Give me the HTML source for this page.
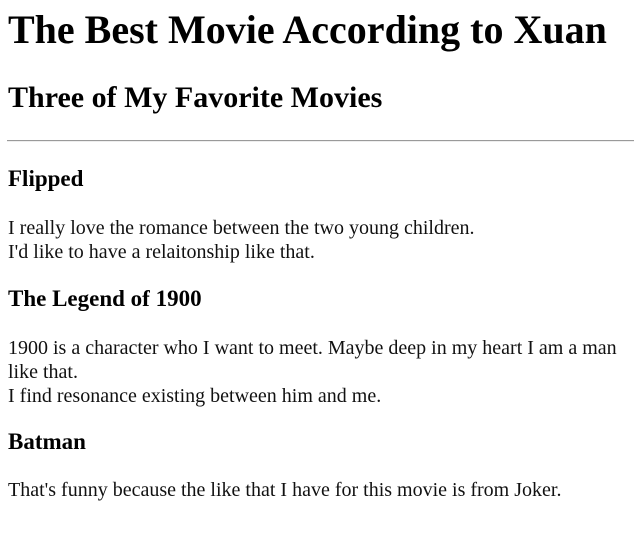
<!DOCTYPE html>
<html><head><style>
body{margin:0;background:#fff;color:#000;font-family:"Liberation Serif","Times New Roman",serif;}
.a{position:absolute;left:8px;white-space:nowrap;margin:0;font-family:"Liberation Serif","Times New Roman",serif;}
h1.a{font-size:40px;line-height:40px;font-weight:bold;top:10px;}
h2.a{font-size:30px;line-height:30px;font-weight:bold;top:83px;}
h3.a{font-size:23px;line-height:23px;font-weight:bold;}
p.a{font-size:20px;line-height:24px;color:#111;}
.hr{position:absolute;left:7px;width:627px;top:140px;height:0;border-top:1px solid #9a9a9a;border-bottom:1px solid #eee;}
</style></head><body>
<h1 class="a">The Best Movie According to Xuan</h1>
<h2 class="a">Three of My Favorite Movies</h2>
<div class="hr"></div>
<h3 class="a" style="top:167px">Flipped</h3>
<p class="a" style="top:216px">I really love the romance between the two young children.<br>I'd like to have a relaitonship like that.</p>
<h3 class="a" style="top:287px">The Legend of 1900</h3>
<p class="a" style="top:336px">1900 is a character who I want to meet. Maybe deep in my heart I am a man<br>like that.<br>I find resonance existing between him and me.</p>
<h3 class="a" style="top:430px">Batman</h3>
<p class="a" style="top:478px">That's funny because the like that I have for this movie is from Joker.</p>
</body></html>
